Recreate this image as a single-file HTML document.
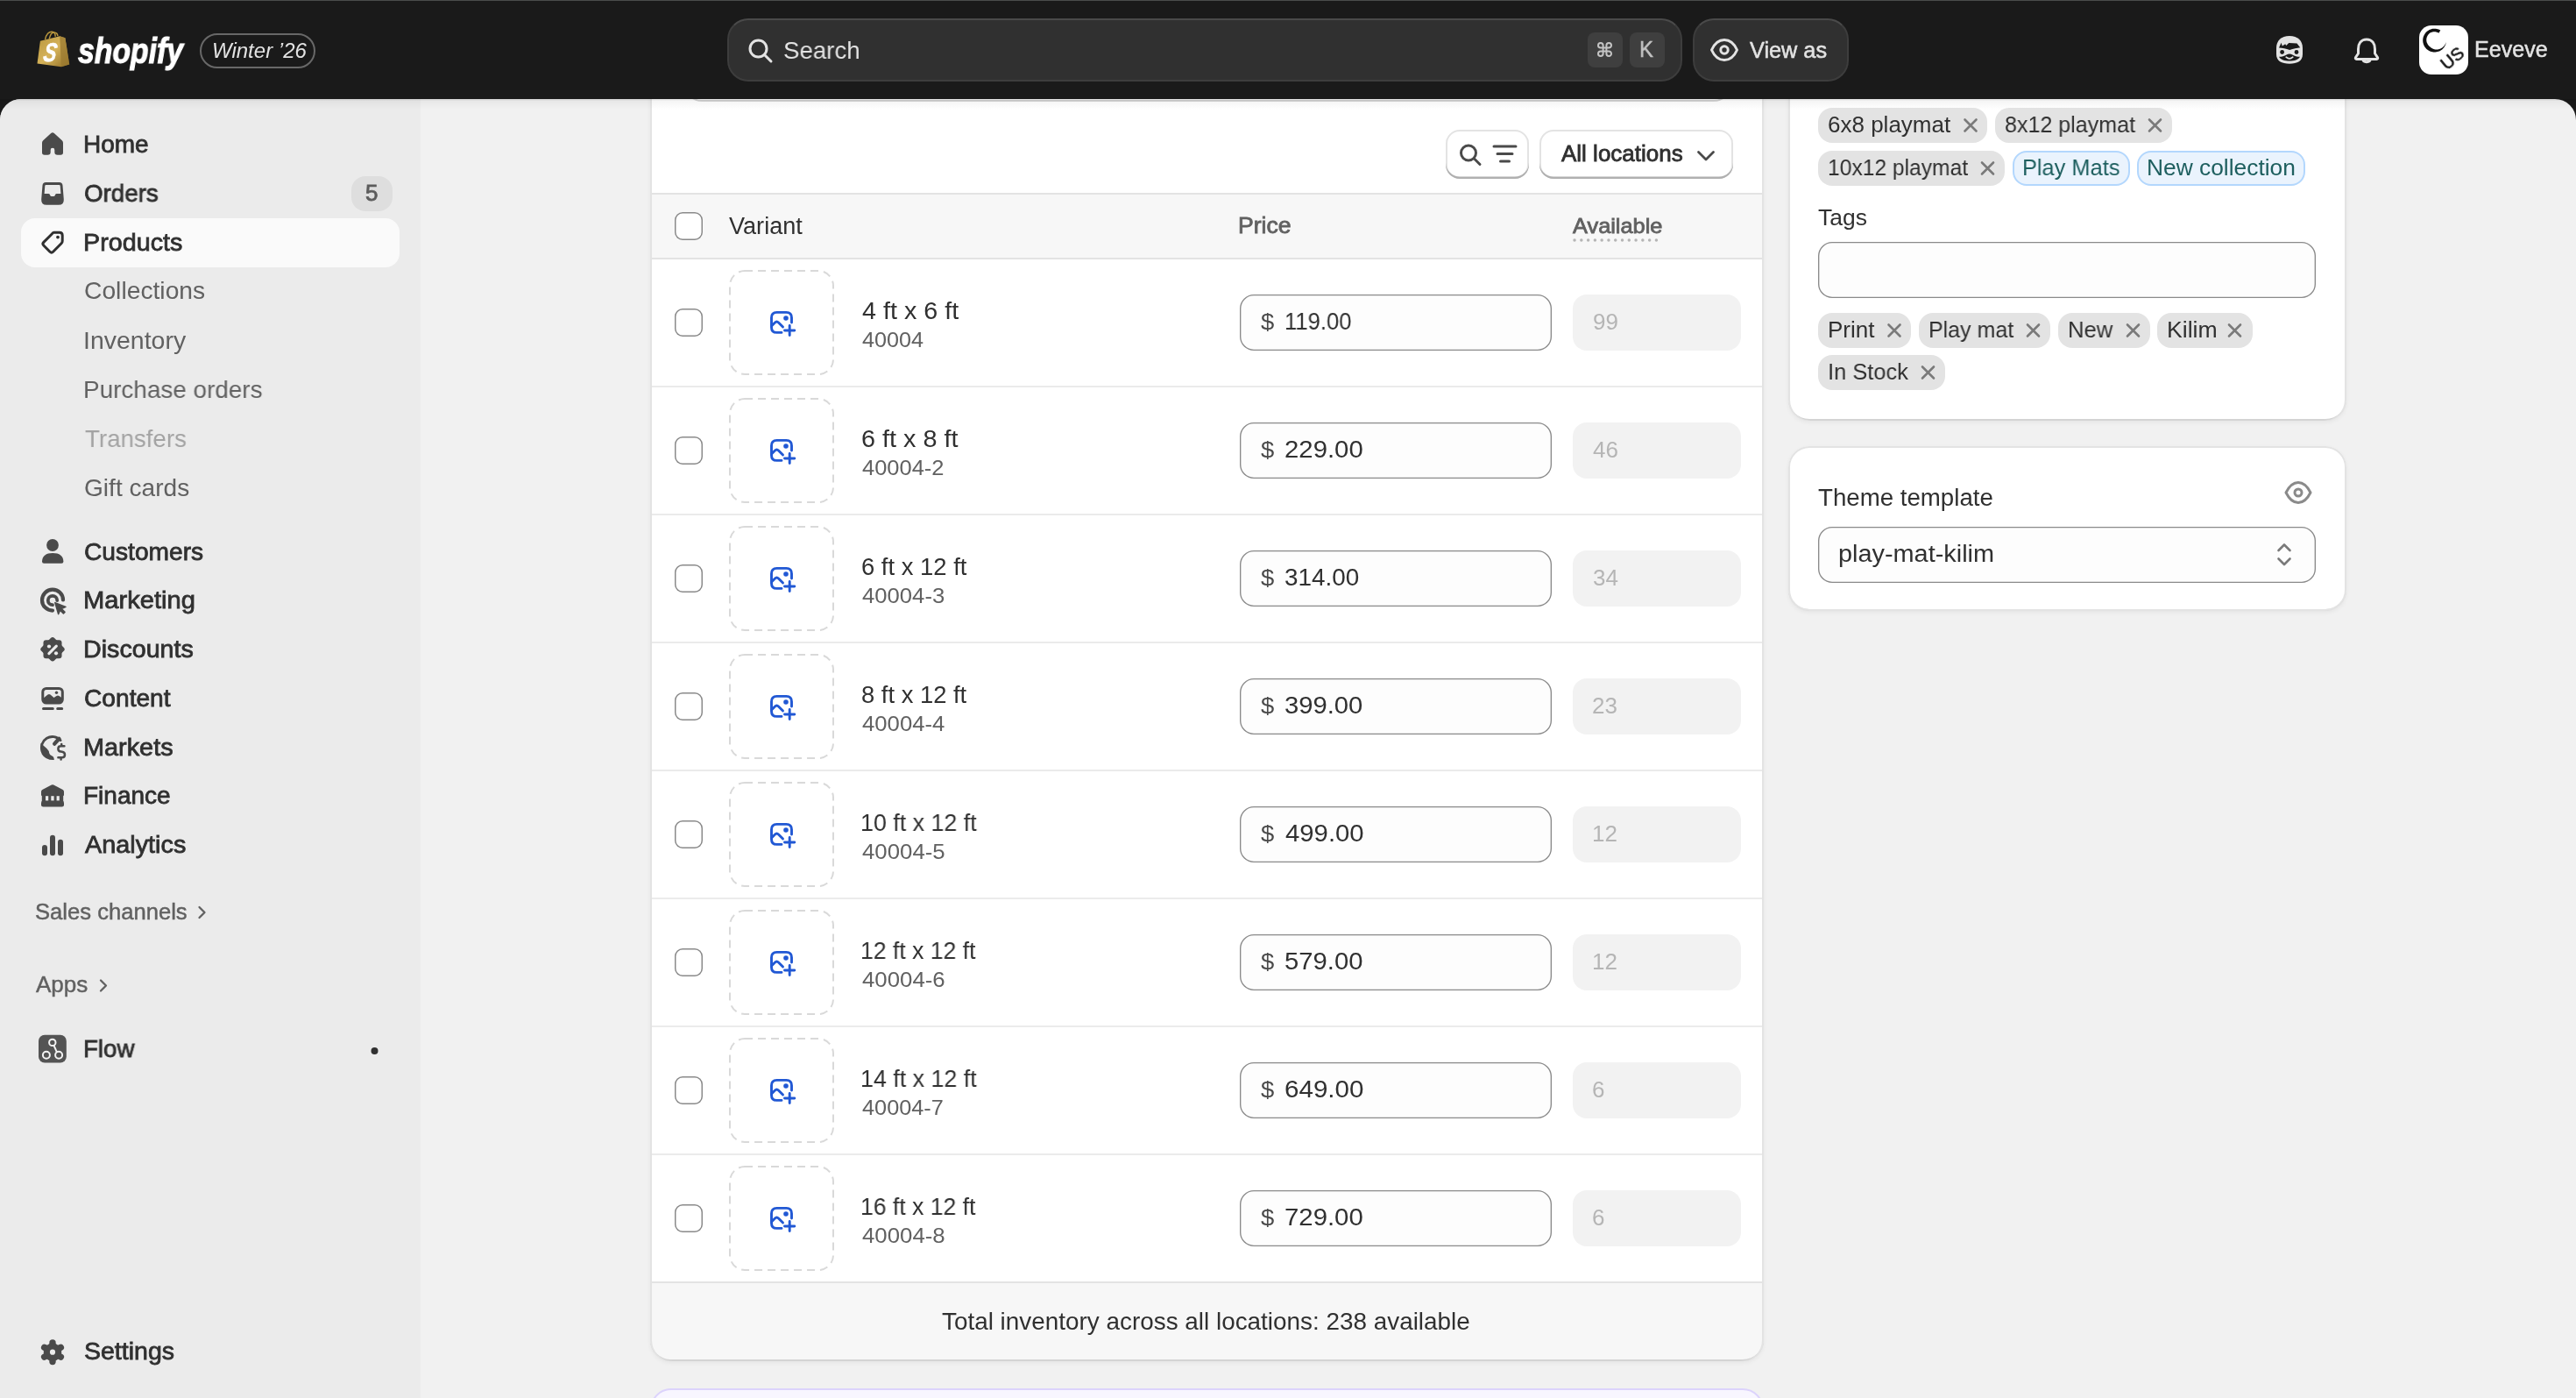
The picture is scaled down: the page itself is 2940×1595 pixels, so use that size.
<!DOCTYPE html><html><head><meta charset="utf-8"><style>
html,body{margin:0;padding:0;width:2940px;height:1595px;overflow:hidden;background:#1a1a1a;}
body>div,#root>div{position:absolute;}
.t{position:absolute;white-space:nowrap;will-change:transform;font-family:"Liberation Sans",sans-serif;}
</style></head><body><div id="root" style="position:absolute;left:0;top:0;width:2940px;height:1595px;overflow:hidden;">
<div style="left:0;top:113px;width:2940px;height:1482px;background:#f1f1f1;border-radius:24px 24px 0 0;overflow:hidden;"><div style="position:absolute;left:0;top:0;width:480px;height:1483px;background:#ebebeb;"></div></div>
<div style="left:24px;top:249px;width:432px;height:56px;background:#fafafa;border-radius:16px;"></div>
<div style="left:401px;top:201px;width:47px;height:40px;background:#dedede;border-radius:16px;"></div>
<div class="t" style="left:417.30px;top:207px;font-size:26px;line-height:26px;color:#5c5c5c;font-weight:normal;font-style:normal;-webkit-text-stroke:0.8px #5c5c5c;">5</div>
<div class="t" style="left:95.00px;top:151px;font-size:28px;line-height:28px;color:#303030;font-weight:normal;font-style:normal;-webkit-text-stroke:0.8px #303030;">Home</div>
<div class="t" style="left:95.99px;top:207px;font-size:28px;line-height:28px;color:#303030;font-weight:normal;font-style:normal;transform:scaleX(0.9906);transform-origin:0 0;-webkit-text-stroke:0.8px #303030;">Orders</div>
<div class="t" style="left:94.94px;top:263px;font-size:28px;line-height:28px;color:#303030;font-weight:normal;font-style:normal;transform:scaleX(1.0258);transform-origin:0 0;-webkit-text-stroke:0.8px #303030;">Products</div>
<div class="t" style="left:95.87px;top:616px;font-size:28px;line-height:28px;color:#303030;font-weight:normal;font-style:normal;transform:scaleX(1.0058);transform-origin:0 0;-webkit-text-stroke:0.8px #303030;">Customers</div>
<div class="t" style="left:94.91px;top:671px;font-size:28px;line-height:28px;color:#303030;font-weight:normal;font-style:normal;transform:scaleX(1.0409);transform-origin:0 0;-webkit-text-stroke:0.8px #303030;">Marketing</div>
<div class="t" style="left:94.95px;top:727px;font-size:28px;line-height:28px;color:#303030;font-weight:normal;font-style:normal;transform:scaleX(1.0236);transform-origin:0 0;-webkit-text-stroke:0.8px #303030;">Discounts</div>
<div class="t" style="left:95.87px;top:783px;font-size:28px;line-height:28px;color:#303030;font-weight:normal;font-style:normal;transform:scaleX(1.0053);transform-origin:0 0;-webkit-text-stroke:0.8px #303030;">Content</div>
<div class="t" style="left:94.93px;top:839px;font-size:28px;line-height:28px;color:#303030;font-weight:normal;font-style:normal;transform:scaleX(1.0305);transform-origin:0 0;-webkit-text-stroke:0.8px #303030;">Markets</div>
<div class="t" style="left:95.00px;top:894px;font-size:28px;line-height:28px;color:#303030;font-weight:normal;font-style:normal;-webkit-text-stroke:0.8px #303030;">Finance</div>
<div class="t" style="left:97.24px;top:950px;font-size:28px;line-height:28px;color:#303030;font-weight:normal;font-style:normal;transform:scaleX(1.0291);transform-origin:0 0;-webkit-text-stroke:0.8px #303030;">Analytics</div>
<div class="t" style="left:95.03px;top:1183px;font-size:28px;line-height:28px;color:#303030;font-weight:normal;font-style:normal;transform:scaleX(0.9879);transform-origin:0 0;-webkit-text-stroke:0.8px #303030;">Flow</div>
<div class="t" style="left:96.01px;top:1528px;font-size:28px;line-height:28px;color:#303030;font-weight:normal;font-style:normal;transform:scaleX(1.0183);transform-origin:0 0;-webkit-text-stroke:0.8px #303030;">Settings</div>
<div class="t" style="left:95.82px;top:318px;font-size:28px;line-height:28px;color:#616161;font-weight:normal;font-style:normal;transform:scaleX(1.0092);transform-origin:0 0;">Collections</div>
<div class="t" style="left:94.62px;top:375px;font-size:28px;line-height:28px;color:#616161;font-weight:normal;font-style:normal;transform:scaleX(1.0175);transform-origin:0 0;">Inventory</div>
<div class="t" style="left:94.96px;top:431px;font-size:28px;line-height:28px;color:#616161;font-weight:normal;font-style:normal;transform:scaleX(0.9957);transform-origin:0 0;">Purchase orders</div>
<div class="t" style="left:96.63px;top:487px;font-size:28px;line-height:28px;color:#a3a3a3;font-weight:normal;font-style:normal;transform:scaleX(0.9884);transform-origin:0 0;">Transfers</div>
<div class="t" style="left:95.84px;top:543px;font-size:28px;line-height:28px;color:#616161;font-weight:normal;font-style:normal;transform:scaleX(1.0031);transform-origin:0 0;">Gift cards</div>
<div class="t" style="left:39.56px;top:1028px;font-size:25.5px;line-height:25.5px;color:#616161;font-weight:normal;font-style:normal;transform:scaleX(1.0040);transform-origin:0 0;-webkit-text-stroke:0.45px #616161;">Sales channels</div>
<div class="t" style="left:40.67px;top:1111px;font-size:25.5px;line-height:25.5px;color:#616161;font-weight:normal;font-style:normal;transform:scaleX(1.0201);transform-origin:0 0;-webkit-text-stroke:0.45px #616161;">Apps</div>
<div style="left:742px;top:40px;width:1271px;height:1512.5px;background:#ffffff;border-radius:24px;box-shadow:inset 2px 0 0 #e3e3e3, inset -2px 0 0 #e3e3e3, inset 0 -2px 0 #d4d4d4, 0 2px 5px rgba(0,0,0,0.05);overflow:hidden;"></div>
<div style="left:781px;top:90px;width:1195px;height:23.5px;border-radius:0 0 20px 20px;box-shadow:0 2px 0 #d4d4d4;"></div>
<div style="left:1650px;top:148px;width:95px;height:56px;background:#fff;border-radius:16px;box-shadow:inset 0 -2.5px 0 #b0b0b0, inset 0 0 0 2px #e3e3e3;"></div>
<div style="left:1757px;top:148px;width:221px;height:56px;background:#fff;border-radius:16px;box-shadow:inset 0 -2.5px 0 #b0b0b0, inset 0 0 0 2px #e3e3e3;"></div>
<div class="t" style="left:1782.35px;top:162px;font-size:26px;line-height:26px;color:#303030;font-weight:normal;font-style:normal;-webkit-text-stroke:0.8px #303030;">All locations</div>
<div style="left:744px;top:220px;width:1267px;height:2px;background:#e3e3e3;"></div>
<div style="left:744px;top:222px;width:1267px;height:72px;background:#f7f7f7;"></div>
<div style="left:744px;top:294px;width:1267px;height:2px;background:#e3e3e3;"></div>
<div style="left:770px;top:242px;width:32px;height:32px;background:#fff;box-shadow:inset 0 0 0 1.5px #8a8a8a;border-radius:9px;"></div>
<div class="t" style="left:832.38px;top:245px;font-size:27px;line-height:27px;color:#303030;font-weight:normal;font-style:normal;transform:scaleX(1.0031);transform-origin:0 0;">Variant</div>
<div class="t" style="left:1413.22px;top:245px;font-size:25px;line-height:25px;color:#616161;font-weight:normal;font-style:normal;transform:scaleX(1.0633);transform-origin:0 0;-webkit-text-stroke:0.8px #616161;">Price</div>
<div class="t" style="left:1795.35px;top:246px;font-size:24px;line-height:24px;color:#616161;font-weight:normal;font-style:normal;transform:scaleX(1.0563);transform-origin:0 0;-webkit-text-stroke:0.8px #616161;">Available</div>
<div style="left:744px;top:440px;width:1267px;height:2px;background:#ebebeb;"></div>
<div style="left:770px;top:352px;width:32px;height:32px;background:#fff;box-shadow:inset 0 0 0 1.5px #8a8a8a;border-radius:9px;"></div>
<div class="t" style="left:983.84px;top:342px;font-size:27px;line-height:27px;color:#303030;font-weight:normal;font-style:normal;transform:scaleX(1.0635);transform-origin:0 0;">4 ft x 6 ft</div>
<div class="t" style="left:983.92px;top:376px;font-size:24px;line-height:24px;color:#616161;font-weight:normal;font-style:normal;transform:scaleX(1.0499);transform-origin:0 0;">40004</div>
<div style="left:1415px;top:336px;width:356px;height:64px;background:#fdfdfd;box-shadow:inset 0 0 0 1.35px #8a8a8a;border-radius:16px;"></div>
<div class="t" style="left:1439.21px;top:354px;font-size:26px;line-height:26px;color:#4a4a4a;font-weight:normal;font-style:normal;transform:scaleX(1.0536);transform-origin:0 0;">$</div>
<div class="t" style="left:1465.55px;top:354px;font-size:27px;line-height:27px;color:#303030;font-weight:normal;font-style:normal;transform:scaleX(0.9500);transform-origin:0 0;">119.00</div>
<div style="left:1795px;top:336px;width:192px;height:64px;background:#f2f2f2;border-radius:16px;"></div>
<div class="t" style="left:1817.53px;top:354px;font-size:26px;line-height:26px;color:#b5b5b5;font-weight:normal;font-style:normal;">99</div>
<div style="left:744px;top:586px;width:1267px;height:2px;background:#ebebeb;"></div>
<div style="left:770px;top:498px;width:32px;height:32px;background:#fff;box-shadow:inset 0 0 0 1.5px #8a8a8a;border-radius:9px;"></div>
<div class="t" style="left:983.04px;top:488px;font-size:27px;line-height:27px;color:#303030;font-weight:normal;font-style:normal;transform:scaleX(1.0669);transform-origin:0 0;">6 ft x 8 ft</div>
<div class="t" style="left:983.92px;top:522px;font-size:24px;line-height:24px;color:#616161;font-weight:normal;font-style:normal;transform:scaleX(1.0612);transform-origin:0 0;">40004-2</div>
<div style="left:1415px;top:482px;width:356px;height:64px;background:#fdfdfd;box-shadow:inset 0 0 0 1.35px #8a8a8a;border-radius:16px;"></div>
<div class="t" style="left:1439.21px;top:500px;font-size:26px;line-height:26px;color:#4a4a4a;font-weight:normal;font-style:normal;transform:scaleX(1.0536);transform-origin:0 0;">$</div>
<div class="t" style="left:1466.02px;top:500px;font-size:27px;line-height:27px;color:#303030;font-weight:normal;font-style:normal;transform:scaleX(1.0864);transform-origin:0 0;">229.00</div>
<div style="left:1795px;top:482px;width:192px;height:64px;background:#f2f2f2;border-radius:16px;"></div>
<div class="t" style="left:1818.15px;top:500px;font-size:26px;line-height:26px;color:#b5b5b5;font-weight:normal;font-style:normal;">46</div>
<div style="left:744px;top:732px;width:1267px;height:2px;background:#ebebeb;"></div>
<div style="left:770px;top:644px;width:32px;height:32px;background:#fff;box-shadow:inset 0 0 0 1.5px #8a8a8a;border-radius:9px;"></div>
<div class="t" style="left:983.11px;top:634px;font-size:27px;line-height:27px;color:#303030;font-weight:normal;font-style:normal;transform:scaleX(1.0155);transform-origin:0 0;">6 ft x 12 ft</div>
<div class="t" style="left:983.91px;top:668px;font-size:24px;line-height:24px;color:#616161;font-weight:normal;font-style:normal;transform:scaleX(1.0697);transform-origin:0 0;">40004-3</div>
<div style="left:1415px;top:628px;width:356px;height:64px;background:#fdfdfd;box-shadow:inset 0 0 0 1.35px #8a8a8a;border-radius:16px;"></div>
<div class="t" style="left:1439.21px;top:646px;font-size:26px;line-height:26px;color:#4a4a4a;font-weight:normal;font-style:normal;transform:scaleX(1.0536);transform-origin:0 0;">$</div>
<div class="t" style="left:1466.44px;top:646px;font-size:27px;line-height:27px;color:#303030;font-weight:normal;font-style:normal;transform:scaleX(1.0311);transform-origin:0 0;">314.00</div>
<div style="left:1795px;top:628px;width:192px;height:64px;background:#f2f2f2;border-radius:16px;"></div>
<div class="t" style="left:1817.76px;top:646px;font-size:26px;line-height:26px;color:#b5b5b5;font-weight:normal;font-style:normal;">34</div>
<div style="left:744px;top:878px;width:1267px;height:2px;background:#ebebeb;"></div>
<div style="left:770px;top:790px;width:32px;height:32px;background:#fff;box-shadow:inset 0 0 0 1.5px #8a8a8a;border-radius:9px;"></div>
<div class="t" style="left:983.31px;top:780px;font-size:27px;line-height:27px;color:#303030;font-weight:normal;font-style:normal;transform:scaleX(1.0137);transform-origin:0 0;">8 ft x 12 ft</div>
<div class="t" style="left:983.91px;top:814px;font-size:24px;line-height:24px;color:#616161;font-weight:normal;font-style:normal;transform:scaleX(1.0711);transform-origin:0 0;">40004-4</div>
<div style="left:1415px;top:774px;width:356px;height:64px;background:#fdfdfd;box-shadow:inset 0 0 0 1.35px #8a8a8a;border-radius:16px;"></div>
<div class="t" style="left:1439.21px;top:792px;font-size:26px;line-height:26px;color:#4a4a4a;font-weight:normal;font-style:normal;transform:scaleX(1.0536);transform-origin:0 0;">$</div>
<div class="t" style="left:1466.39px;top:792px;font-size:27px;line-height:27px;color:#303030;font-weight:normal;font-style:normal;transform:scaleX(1.0820);transform-origin:0 0;">399.00</div>
<div style="left:1795px;top:774px;width:192px;height:64px;background:#f2f2f2;border-radius:16px;"></div>
<div class="t" style="left:1817.44px;top:792px;font-size:26px;line-height:26px;color:#b5b5b5;font-weight:normal;font-style:normal;">23</div>
<div style="left:744px;top:1024px;width:1267px;height:2px;background:#ebebeb;"></div>
<div style="left:770px;top:936px;width:32px;height:32px;background:#fff;box-shadow:inset 0 0 0 1.5px #8a8a8a;border-radius:9px;"></div>
<div class="t" style="left:982.46px;top:926px;font-size:27px;line-height:27px;color:#303030;font-weight:normal;font-style:normal;transform:scaleX(0.9937);transform-origin:0 0;">10 ft x 12 ft</div>
<div class="t" style="left:983.91px;top:960px;font-size:24px;line-height:24px;color:#616161;font-weight:normal;font-style:normal;transform:scaleX(1.0749);transform-origin:0 0;">40004-5</div>
<div style="left:1415px;top:920px;width:356px;height:64px;background:#fdfdfd;box-shadow:inset 0 0 0 1.35px #8a8a8a;border-radius:16px;"></div>
<div class="t" style="left:1439.21px;top:938px;font-size:26px;line-height:26px;color:#4a4a4a;font-weight:normal;font-style:normal;transform:scaleX(1.0536);transform-origin:0 0;">$</div>
<div class="t" style="left:1466.83px;top:938px;font-size:27px;line-height:27px;color:#303030;font-weight:normal;font-style:normal;transform:scaleX(1.0852);transform-origin:0 0;">499.00</div>
<div style="left:1795px;top:920px;width:192px;height:64px;background:#f2f2f2;border-radius:16px;"></div>
<div class="t" style="left:1816.77px;top:938px;font-size:26px;line-height:26px;color:#b5b5b5;font-weight:normal;font-style:normal;">12</div>
<div style="left:744px;top:1170px;width:1267px;height:2px;background:#ebebeb;"></div>
<div style="left:770px;top:1082px;width:32px;height:32px;background:#fff;box-shadow:inset 0 0 0 1.5px #8a8a8a;border-radius:9px;"></div>
<div class="t" style="left:982.48px;top:1072px;font-size:27px;line-height:27px;color:#303030;font-weight:normal;font-style:normal;transform:scaleX(0.9846);transform-origin:0 0;">12 ft x 12 ft</div>
<div class="t" style="left:983.91px;top:1106px;font-size:24px;line-height:24px;color:#616161;font-weight:normal;font-style:normal;transform:scaleX(1.0755);transform-origin:0 0;">40004-6</div>
<div style="left:1415px;top:1066px;width:356px;height:64px;background:#fdfdfd;box-shadow:inset 0 0 0 1.35px #8a8a8a;border-radius:16px;"></div>
<div class="t" style="left:1439.21px;top:1084px;font-size:26px;line-height:26px;color:#4a4a4a;font-weight:normal;font-style:normal;transform:scaleX(1.0536);transform-origin:0 0;">$</div>
<div class="t" style="left:1466.33px;top:1084px;font-size:27px;line-height:27px;color:#303030;font-weight:normal;font-style:normal;transform:scaleX(1.0827);transform-origin:0 0;">579.00</div>
<div style="left:1795px;top:1066px;width:192px;height:64px;background:#f2f2f2;border-radius:16px;"></div>
<div class="t" style="left:1816.77px;top:1084px;font-size:26px;line-height:26px;color:#b5b5b5;font-weight:normal;font-style:normal;">12</div>
<div style="left:744px;top:1316px;width:1267px;height:2px;background:#ebebeb;"></div>
<div style="left:770px;top:1228px;width:32px;height:32px;background:#fff;box-shadow:inset 0 0 0 1.5px #8a8a8a;border-radius:9px;"></div>
<div class="t" style="left:982.46px;top:1218px;font-size:27px;line-height:27px;color:#303030;font-weight:normal;font-style:normal;transform:scaleX(0.9937);transform-origin:0 0;">14 ft x 12 ft</div>
<div class="t" style="left:983.92px;top:1252px;font-size:24px;line-height:24px;color:#616161;font-weight:normal;font-style:normal;transform:scaleX(1.0542);transform-origin:0 0;">40004-7</div>
<div style="left:1415px;top:1212px;width:356px;height:64px;background:#fdfdfd;box-shadow:inset 0 0 0 1.35px #8a8a8a;border-radius:16px;"></div>
<div class="t" style="left:1439.21px;top:1230px;font-size:26px;line-height:26px;color:#4a4a4a;font-weight:normal;font-style:normal;transform:scaleX(1.0536);transform-origin:0 0;">$</div>
<div class="t" style="left:1466.00px;top:1230px;font-size:27px;line-height:27px;color:#303030;font-weight:normal;font-style:normal;transform:scaleX(1.0954);transform-origin:0 0;">649.00</div>
<div style="left:1795px;top:1212px;width:192px;height:64px;background:#f2f2f2;border-radius:16px;"></div>
<div class="t" style="left:1817.43px;top:1230px;font-size:26px;line-height:26px;color:#b5b5b5;font-weight:normal;font-style:normal;">6</div>
<div style="left:770px;top:1374px;width:32px;height:32px;background:#fff;box-shadow:inset 0 0 0 1.5px #8a8a8a;border-radius:9px;"></div>
<div class="t" style="left:982.48px;top:1364px;font-size:27px;line-height:27px;color:#303030;font-weight:normal;font-style:normal;transform:scaleX(0.9842);transform-origin:0 0;">16 ft x 12 ft</div>
<div class="t" style="left:983.91px;top:1398px;font-size:24px;line-height:24px;color:#616161;font-weight:normal;font-style:normal;transform:scaleX(1.0753);transform-origin:0 0;">40004-8</div>
<div style="left:1415px;top:1358px;width:356px;height:64px;background:#fdfdfd;box-shadow:inset 0 0 0 1.35px #8a8a8a;border-radius:16px;"></div>
<div class="t" style="left:1439.21px;top:1376px;font-size:26px;line-height:26px;color:#4a4a4a;font-weight:normal;font-style:normal;transform:scaleX(1.0536);transform-origin:0 0;">$</div>
<div class="t" style="left:1466.00px;top:1376px;font-size:27px;line-height:27px;color:#303030;font-weight:normal;font-style:normal;transform:scaleX(1.0868);transform-origin:0 0;">729.00</div>
<div style="left:1795px;top:1358px;width:192px;height:64px;background:#f2f2f2;border-radius:16px;"></div>
<div class="t" style="left:1817.43px;top:1376px;font-size:26px;line-height:26px;color:#b5b5b5;font-weight:normal;font-style:normal;">6</div>
<div style="left:744px;top:1462px;width:1267px;height:2px;background:#e3e3e3;"></div>
<div style="left:742px;top:1464px;width:1271px;height:88.5px;background:#f7f7f7;border-radius:0 0 24px 24px;box-shadow:inset 2px 0 0 #e3e3e3, inset -2px 0 0 #e3e3e3, inset 0 -2px 0 #d4d4d4;"></div>
<div class="t" style="left:1074.87px;top:1494px;font-size:27.8px;line-height:27.8px;color:#303030;font-weight:normal;font-style:normal;transform:scaleX(1.0028);transform-origin:0 0;">Total inventory across all locations: 238 available</div>
<div style="left:742px;top:1584px;width:1271px;height:116px;background:#f8f6ff;border:2px solid #dcd3fc;border-radius:24px;box-sizing:border-box;"></div>
<div style="left:2041px;top:40px;width:637px;height:439.5px;background:#ffffff;border-radius:24px;box-shadow:inset 2px 0 0 #e3e3e3, inset -2px 0 0 #e3e3e3, inset 0 -2px 0 #d4d4d4, 0 2px 5px rgba(0,0,0,0.05);"></div>
<div style="left:2075px;top:123px;width:193px;height:40px;background:#e3e3e3;border-radius:16px;"></div>
<div class="t" style="left:2086.18px;top:129px;font-size:26px;line-height:26px;color:#303030;font-weight:normal;font-style:normal;">6x8 playmat</div>
<div style="left:2277px;top:123px;width:202px;height:40px;background:#e3e3e3;border-radius:16px;"></div>
<div class="t" style="left:2288.16px;top:129px;font-size:26px;line-height:26px;color:#303030;font-weight:normal;font-style:normal;transform:scaleX(0.9637);transform-origin:0 0;">8x12 playmat</div>
<div style="left:2075px;top:172px;width:213px;height:40px;background:#e3e3e3;border-radius:16px;"></div>
<div class="t" style="left:2085.63px;top:178px;font-size:26px;line-height:26px;color:#303030;font-weight:normal;font-style:normal;transform:scaleX(0.9465);transform-origin:0 0;">10x12 playmat</div>
<div style="left:2297px;top:172px;width:134px;height:40px;background:#eaf3fd;border:2px solid #b3d7fd;border-radius:16px;box-sizing:border-box;"></div>
<div class="t" style="left:2307.72px;top:178px;font-size:26px;line-height:26px;color:#1e5f5f;font-weight:normal;font-style:normal;transform:scaleX(0.9759);transform-origin:0 0;">Play Mats</div>
<div style="left:2439px;top:172px;width:192px;height:40px;background:#eaf3fd;border:2px solid #b3d7fd;border-radius:16px;box-sizing:border-box;"></div>
<div class="t" style="left:2449.84px;top:178px;font-size:26px;line-height:26px;color:#1e5f5f;font-weight:normal;font-style:normal;transform:scaleX(1.0134);transform-origin:0 0;">New collection</div>
<div class="t" style="left:2075.16px;top:235px;font-size:26px;line-height:26px;color:#303030;font-weight:normal;font-style:normal;transform:scaleX(1.0173);transform-origin:0 0;">Tags</div>
<div style="left:2075px;top:276px;width:568px;height:64px;background:#fdfdfd;box-shadow:inset 0 0 0 1.35px #8a8a8a;border-radius:16px;"></div>
<div style="left:2075px;top:357px;width:106px;height:40px;background:#e3e3e3;border-radius:16px;"></div>
<div class="t" style="left:2085.88px;top:363px;font-size:26px;line-height:26px;color:#303030;font-weight:normal;font-style:normal;transform:scaleX(0.9924);transform-origin:0 0;">Print</div>
<div style="left:2190px;top:357px;width:150px;height:40px;background:#e3e3e3;border-radius:16px;"></div>
<div class="t" style="left:2200.95px;top:363px;font-size:26px;line-height:26px;color:#303030;font-weight:normal;font-style:normal;transform:scaleX(0.9613);transform-origin:0 0;">Play mat</div>
<div style="left:2349px;top:357px;width:105px;height:40px;background:#e3e3e3;border-radius:16px;"></div>
<div class="t" style="left:2359.90px;top:363px;font-size:26px;line-height:26px;color:#303030;font-weight:normal;font-style:normal;transform:scaleX(0.9861);transform-origin:0 0;">New</div>
<div style="left:2462px;top:357px;width:109px;height:40px;background:#e3e3e3;border-radius:16px;"></div>
<div class="t" style="left:2472.82px;top:363px;font-size:26px;line-height:26px;color:#303030;font-weight:normal;font-style:normal;transform:scaleX(1.0242);transform-origin:0 0;">Kilim</div>
<div style="left:2075px;top:405px;width:145px;height:40px;background:#e3e3e3;border-radius:16px;"></div>
<div class="t" style="left:2085.65px;top:411px;font-size:26px;line-height:26px;color:#303030;font-weight:normal;font-style:normal;transform:scaleX(0.9774);transform-origin:0 0;">In Stock</div>
<div style="left:2041px;top:508.5px;width:637px;height:188.5px;background:#ffffff;border-radius:24px;box-shadow:inset 0 0 0 2px #e3e3e3, inset 0 -2px 0 #d4d4d4, 0 2px 5px rgba(0,0,0,0.05);"></div>
<div class="t" style="left:2075.13px;top:555px;font-size:27px;line-height:27px;color:#303030;font-weight:normal;font-style:normal;transform:scaleX(1.0244);transform-origin:0 0;">Theme template</div>
<div style="left:2075px;top:601px;width:568px;height:64px;background:#fdfdfd;box-shadow:inset 0 0 0 1.35px #8a8a8a;border-radius:16px;"></div>
<div class="t" style="left:2097.64px;top:619px;font-size:27px;line-height:27px;color:#303030;font-weight:normal;font-style:normal;transform:scaleX(1.0691);transform-origin:0 0;">play-mat-kilim</div>
<div style="left:0px;top:0px;width:2940px;height:113px;background:#1a1a1a;"></div>
<div style="left:0px;top:0px;width:2940px;height:1px;background:#4a4c4b;"></div>
<div class="t" style="left:88.62px;top:38px;font-size:40px;line-height:40px;color:#ffffff;font-weight:bold;font-style:italic;transform:scaleX(0.8436);transform-origin:0 0;-webkit-text-stroke:1.1px #fff;">shopify</div>
<div style="left:228px;top:38px;width:132px;height:40px;border:2px solid #686868;border-radius:20px;box-sizing:border-box;"></div>
<div class="t" style="left:241.53px;top:46px;font-size:24px;line-height:24px;color:#e3e3e3;font-weight:normal;font-style:italic;">Winter ’26</div>
<div style="left:830px;top:21px;width:1090px;height:72px;background:#303030;border:2px solid #3d3d3d;border-top-color:#4a4a4a;border-radius:24px;box-sizing:border-box;"></div>
<div class="t" style="left:893.75px;top:44px;font-size:28px;line-height:28px;color:#e3e3e3;font-weight:normal;font-style:normal;transform:scaleX(0.9868);transform-origin:0 0;">Search</div>
<div style="left:1812px;top:37px;width:40px;height:40px;background:#3f3f3f;border-radius:8px;"></div>
<div style="left:1860px;top:37px;width:40px;height:40px;background:#3f3f3f;border-radius:8px;"></div>
<div class="t" style="left:1871.29px;top:43px;font-size:26px;line-height:26px;color:#c4c4c4;font-weight:normal;font-style:normal;transform:scaleX(0.9184);transform-origin:0 0;-webkit-text-stroke:0.5px #c4c4c4;">K</div>
<div style="left:1932px;top:21px;width:178px;height:72px;background:#303030;border:2px solid #3d3d3d;border-top-color:#4a4a4a;border-radius:24px;box-sizing:border-box;"></div>
<div class="t" style="left:1997.14px;top:45px;font-size:25px;line-height:25px;color:#e3e3e3;font-weight:normal;font-style:normal;transform:scaleX(1.0113);transform-origin:0 0;-webkit-text-stroke:0.5px #e3e3e3;">View as</div>
<div style="left:2761px;top:29px;width:56px;height:56px;background:#ffffff;border-radius:14px;"></div>
<div class="t" style="left:2792px;top:63px;font-size:21px;line-height:21px;color:#111;-webkit-text-stroke:0.6px #111;transform-origin:0 17px;transform:rotate(-40deg) scaleX(0.95);">US</div>
<div class="t" style="left:2824.19px;top:44px;font-size:25px;line-height:25px;color:#e3e3e3;font-weight:normal;font-style:normal;transform:scaleX(1.0034);transform-origin:0 0;-webkit-text-stroke:0.5px #e3e3e3;">Eeveve</div>
<div style="left:0px;top:113px;width:2940px;height:12px;background:linear-gradient(rgba(0,0,0,0.13),rgba(0,0,0,0.04) 2.5px,rgba(0,0,0,0) 12px);"></div>
<svg style="position:absolute;left:0;top:0;" width="2940" height="1595" viewBox="0 0 2940 1595">
<defs><linearGradient id="bagg" x1="0" y1="0" x2="1" y2="1"><stop offset="0" stop-color="#b8963e"/><stop offset="0.5" stop-color="#d6b35a"/><stop offset="1" stop-color="#8f6d25"/></linearGradient></defs>
<g>
<path d="M45.9 46.8 L68.2 41.3 L74.4 43.3 L79.2 73.5 L69.9 76.3 L42.5 72.5 Z" fill="url(#bagg)"/>
<path d="M68.2 41.3 L74.4 43.3 L79.2 73.5 L69.9 76.3 Z" fill="#9a7a30" opacity="0.75"/>
<path d="M51.6 45.2 C52.5 39 56 36 59.3 36.2 C62 36.4 63.2 39 63.2 41.8" fill="none" stroke="#b8963e" stroke-width="1.5"/>
<path d="M56.3 44 C57.5 39.5 59.5 37 61.5 37.1 C64.5 37.3 65.8 39.5 65.9 41.2" fill="none" stroke="#b8963e" stroke-width="1.5"/>
</g>
<text x="0" y="0" font-family="Liberation Sans" font-weight="bold" font-style="italic" font-size="30" fill="#ffffff" stroke="#ffffff" stroke-width="0.6" transform="translate(48.6 70.1) skewX(-9) scale(0.74 1)">S</text>
<circle cx="865.5" cy="55.5" r="9.5" fill="none" stroke="#e3e3e3" stroke-width="3"/><path d="M872.5 62.5 L880 70" stroke="#e3e3e3" stroke-width="3" stroke-linecap="round"/>
<path d="M1829.6 51.8 A2.8 2.8 0 1 0 1826.8 54.6 L1836.2 54.6 A2.8 2.8 0 1 0 1833.4 51.8 L1833.4 61.2 A2.8 2.8 0 1 0 1836.2 58.4 L1826.8 58.4 A2.8 2.8 0 1 0 1829.6 61.2 Z" fill="none" stroke="#c4c4c4" stroke-width="2"/>
<path d="M1953.5 57 C1957 49 1962 45.5 1968 45.5 C1974 45.5 1979 49 1982.5 57 C1979 65 1974 68.5 1968 68.5 C1962 68.5 1957 65 1953.5 57 Z" fill="none" stroke="#e3e3e3" stroke-width="3" stroke-linejoin="round"/><circle cx="1968" cy="57" r="4.2" fill="none" stroke="#e3e3e3" stroke-width="3"/>
<g>
<path d="M2613 41.1 C2622.5 41.1 2628 46.5 2628 55 L2628 62 C2628 69.5 2622 72.7 2613 72.7 C2604 72.7 2598 69.5 2598 62 L2598 55 C2598 46.5 2603.5 41.1 2613 41.1 Z" fill="#e3e3e3"/>
<path d="M2601 54.5 L2603.6 48.8 L2604.8 52.5 L2608.2 50.2 L2609.2 52 L2612.3 48.9 L2621.5 49.6 L2625.2 54.2 C2621.5 54.6 2617.5 55.6 2613.2 57 C2609 55.6 2605 54.8 2601 54.5 Z" fill="#1a1a1a"/>
<circle cx="2604.6" cy="59.5" r="2.4" fill="#1a1a1a"/><circle cx="2621" cy="59.5" r="2.4" fill="#1a1a1a"/>
<path d="M2601 64.8 C2604.5 64.8 2607 64 2609.6 62.4 C2611.6 61.2 2614.4 61.2 2616.4 62.4 C2619 64 2621.5 64.8 2625 64.8 C2623 68.2 2618.5 69.6 2613 69.6 C2607.5 69.6 2603 68.2 2601 64.8 Z" fill="#1a1a1a"/>
<path d="M2609.2 65.2 Q2613 68.6 2616.8 65.2" fill="none" stroke="#e3e3e3" stroke-width="1.7" stroke-linecap="round"/>
</g>
<path d="M2701 45 C2694.5 45 2691.5 50 2691.5 56 L2691.5 61 L2688.5 65.5 C2688 66.5 2688.5 67.5 2689.5 67.5 L2712.5 67.5 C2713.5 67.5 2714 66.5 2713.5 65.5 L2710.5 61 L2710.5 56 C2710.5 50 2707.5 45 2701 45 Z" fill="none" stroke="#e3e3e3" stroke-width="3" stroke-linejoin="round"/><path d="M2697 68 C2697 71.5 2705 71.5 2705 68" fill="none" stroke="#e3e3e3" stroke-width="3"/>
<path fill="#111" d="M2791.87 47.96 L2791.66 49.08 L2791.36 50.18 L2790.97 51.25 L2790.49 52.28 L2789.92 53.27 L2789.27 54.20 L2788.55 55.08 L2787.75 55.89 L2786.89 56.63 L2785.96 57.30 L2784.99 57.88 L2783.96 58.38 L2782.90 58.79 L2781.81 59.11 L2780.70 59.34 L2779.57 59.47 L2778.43 59.50 L2777.29 59.44 L2776.17 59.28 L2775.06 59.02 L2773.97 58.68 L2772.92 58.24 L2771.91 57.71 L2770.95 57.10 L2770.05 56.41 L2769.20 55.65 L2768.43 54.82 L2767.72 53.93 L2767.10 52.97 L2766.56 51.97 L2766.10 50.93 L2765.74 49.85 L2765.46 48.75 L2765.29 47.62 L2765.21 46.49 L2765.22 45.35 L2765.33 44.22 L2765.54 43.10 L2765.84 42.00 L2766.23 40.94 L2766.72 39.91 L2767.29 38.92 L2767.94 37.99 L2768.66 37.11 L2769.46 36.30 L2770.33 35.56 L2771.25 34.90 L2772.23 34.31 L2773.25 33.81 L2774.31 33.40 L2775.40 33.09 L2776.52 32.86 L2777.65 32.73 L2778.79 32.70 L2779.92 32.77 L2781.05 32.93 L2782.16 33.18 L2783.24 33.53 L2784.29 33.97 L2785.30 34.50 L2783.40 37.79 L2782.70 37.37 L2781.96 37.01 L2781.18 36.72 L2780.39 36.49 L2779.57 36.33 L2778.74 36.23 L2777.90 36.21 L2777.05 36.27 L2776.21 36.39 L2775.40 36.63 L2774.61 36.93 L2773.84 37.30 L2773.15 37.79 L2772.49 38.32 L2771.89 38.91 L2771.35 39.54 L2770.86 40.21 L2770.44 40.92 L2770.08 41.66 L2769.78 42.42 L2769.55 43.20 L2769.40 43.99 L2769.30 44.78 L2769.28 45.58 L2769.33 46.37 L2769.44 47.15 L2769.61 47.91 L2769.85 48.65 L2770.15 49.36 L2770.51 50.05 L2770.87 50.72 L2771.29 51.36 L2771.77 51.96 L2772.29 52.52 L2772.86 53.03 L2773.46 53.49 L2774.10 53.91 L2774.70 54.44 L2775.36 54.92 L2776.06 55.35 L2776.82 55.71 L2777.63 56.02 L2778.47 56.26 L2779.35 56.42 L2780.25 56.51 L2781.17 56.52 L2782.11 56.44 L2783.05 56.28 L2783.99 56.04 L2784.92 55.70 L2785.83 55.28 L2786.71 54.78 L2787.56 54.18 L2788.36 53.51 L2789.12 52.76 L2789.81 51.93 L2790.44 51.03 L2791.00 50.07 L2791.48 49.04 L2791.87 47.96 Z"/>
<path d="M227.5 1035 L233.5 1041 L227.5 1047" fill="none" stroke="#616161" stroke-width="2.3" stroke-linecap="round" stroke-linejoin="round"/>
<path d="M115 1118.5 L121 1124.5 L115 1130.5" fill="none" stroke="#616161" stroke-width="2.3" stroke-linecap="round" stroke-linejoin="round"/>
<circle cx="427.5" cy="1199" r="4" fill="#303030"/>
<circle cx="1676" cy="174.5" r="8.5" fill="none" stroke="#4a4a4a" stroke-width="3"/><path d="M1682.5 181 L1689 187.5" stroke="#4a4a4a" stroke-width="3" stroke-linecap="round"/><path d="M1705 167 L1730 167 M1709 175.5 L1726 175.5 M1712.5 184 L1722.5 184" stroke="#4a4a4a" stroke-width="3" stroke-linecap="round"/>
<path d="M1938.5 173.5 L1947 182 L1955.5 173.5" fill="none" stroke="#4a4a4a" stroke-width="2.8" stroke-linecap="round" stroke-linejoin="round"/>
<line x1="1797" y1="274" x2="1898" y2="274" stroke="#b5b5b5" stroke-width="3.4" stroke-dasharray="0.1 7.68" stroke-linecap="round"/>
<rect x="833" y="309" width="118" height="118" rx="17" fill="none" stroke="#d9d9d9" stroke-width="2" stroke-dasharray="9 6"/>
<g transform="translate(0,0)" fill="none" stroke="#2158d4" stroke-width="2.9" stroke-linecap="round" stroke-linejoin="round"><path d="M903.5 368 L903.5 362.5 Q903.5 356.4 897.5 356.4 L886.5 356.4 Q880.5 356.4 880.5 362.5 L880.5 373.4 Q880.5 379.4 886.5 379.4 L892 379.4"/><path d="M881 371.5 L884.5 368 Q886.5 366 888.5 368 L893.5 373"/><path d="M901.2 371.5 L901.2 382.5 M895.5 377 L906.8 377"/><circle cx="897" cy="363" r="1.6" fill="#2158d4" stroke-width="2.4"/></g>
<rect x="833" y="455" width="118" height="118" rx="17" fill="none" stroke="#d9d9d9" stroke-width="2" stroke-dasharray="9 6"/>
<g transform="translate(0,146)" fill="none" stroke="#2158d4" stroke-width="2.9" stroke-linecap="round" stroke-linejoin="round"><path d="M903.5 368 L903.5 362.5 Q903.5 356.4 897.5 356.4 L886.5 356.4 Q880.5 356.4 880.5 362.5 L880.5 373.4 Q880.5 379.4 886.5 379.4 L892 379.4"/><path d="M881 371.5 L884.5 368 Q886.5 366 888.5 368 L893.5 373"/><path d="M901.2 371.5 L901.2 382.5 M895.5 377 L906.8 377"/><circle cx="897" cy="363" r="1.6" fill="#2158d4" stroke-width="2.4"/></g>
<rect x="833" y="601" width="118" height="118" rx="17" fill="none" stroke="#d9d9d9" stroke-width="2" stroke-dasharray="9 6"/>
<g transform="translate(0,292)" fill="none" stroke="#2158d4" stroke-width="2.9" stroke-linecap="round" stroke-linejoin="round"><path d="M903.5 368 L903.5 362.5 Q903.5 356.4 897.5 356.4 L886.5 356.4 Q880.5 356.4 880.5 362.5 L880.5 373.4 Q880.5 379.4 886.5 379.4 L892 379.4"/><path d="M881 371.5 L884.5 368 Q886.5 366 888.5 368 L893.5 373"/><path d="M901.2 371.5 L901.2 382.5 M895.5 377 L906.8 377"/><circle cx="897" cy="363" r="1.6" fill="#2158d4" stroke-width="2.4"/></g>
<rect x="833" y="747" width="118" height="118" rx="17" fill="none" stroke="#d9d9d9" stroke-width="2" stroke-dasharray="9 6"/>
<g transform="translate(0,438)" fill="none" stroke="#2158d4" stroke-width="2.9" stroke-linecap="round" stroke-linejoin="round"><path d="M903.5 368 L903.5 362.5 Q903.5 356.4 897.5 356.4 L886.5 356.4 Q880.5 356.4 880.5 362.5 L880.5 373.4 Q880.5 379.4 886.5 379.4 L892 379.4"/><path d="M881 371.5 L884.5 368 Q886.5 366 888.5 368 L893.5 373"/><path d="M901.2 371.5 L901.2 382.5 M895.5 377 L906.8 377"/><circle cx="897" cy="363" r="1.6" fill="#2158d4" stroke-width="2.4"/></g>
<rect x="833" y="893" width="118" height="118" rx="17" fill="none" stroke="#d9d9d9" stroke-width="2" stroke-dasharray="9 6"/>
<g transform="translate(0,584)" fill="none" stroke="#2158d4" stroke-width="2.9" stroke-linecap="round" stroke-linejoin="round"><path d="M903.5 368 L903.5 362.5 Q903.5 356.4 897.5 356.4 L886.5 356.4 Q880.5 356.4 880.5 362.5 L880.5 373.4 Q880.5 379.4 886.5 379.4 L892 379.4"/><path d="M881 371.5 L884.5 368 Q886.5 366 888.5 368 L893.5 373"/><path d="M901.2 371.5 L901.2 382.5 M895.5 377 L906.8 377"/><circle cx="897" cy="363" r="1.6" fill="#2158d4" stroke-width="2.4"/></g>
<rect x="833" y="1039" width="118" height="118" rx="17" fill="none" stroke="#d9d9d9" stroke-width="2" stroke-dasharray="9 6"/>
<g transform="translate(0,730)" fill="none" stroke="#2158d4" stroke-width="2.9" stroke-linecap="round" stroke-linejoin="round"><path d="M903.5 368 L903.5 362.5 Q903.5 356.4 897.5 356.4 L886.5 356.4 Q880.5 356.4 880.5 362.5 L880.5 373.4 Q880.5 379.4 886.5 379.4 L892 379.4"/><path d="M881 371.5 L884.5 368 Q886.5 366 888.5 368 L893.5 373"/><path d="M901.2 371.5 L901.2 382.5 M895.5 377 L906.8 377"/><circle cx="897" cy="363" r="1.6" fill="#2158d4" stroke-width="2.4"/></g>
<rect x="833" y="1185" width="118" height="118" rx="17" fill="none" stroke="#d9d9d9" stroke-width="2" stroke-dasharray="9 6"/>
<g transform="translate(0,876)" fill="none" stroke="#2158d4" stroke-width="2.9" stroke-linecap="round" stroke-linejoin="round"><path d="M903.5 368 L903.5 362.5 Q903.5 356.4 897.5 356.4 L886.5 356.4 Q880.5 356.4 880.5 362.5 L880.5 373.4 Q880.5 379.4 886.5 379.4 L892 379.4"/><path d="M881 371.5 L884.5 368 Q886.5 366 888.5 368 L893.5 373"/><path d="M901.2 371.5 L901.2 382.5 M895.5 377 L906.8 377"/><circle cx="897" cy="363" r="1.6" fill="#2158d4" stroke-width="2.4"/></g>
<rect x="833" y="1331" width="118" height="118" rx="17" fill="none" stroke="#d9d9d9" stroke-width="2" stroke-dasharray="9 6"/>
<g transform="translate(0,1022)" fill="none" stroke="#2158d4" stroke-width="2.9" stroke-linecap="round" stroke-linejoin="round"><path d="M903.5 368 L903.5 362.5 Q903.5 356.4 897.5 356.4 L886.5 356.4 Q880.5 356.4 880.5 362.5 L880.5 373.4 Q880.5 379.4 886.5 379.4 L892 379.4"/><path d="M881 371.5 L884.5 368 Q886.5 366 888.5 368 L893.5 373"/><path d="M901.2 371.5 L901.2 382.5 M895.5 377 L906.8 377"/><circle cx="897" cy="363" r="1.6" fill="#2158d4" stroke-width="2.4"/></g>
<path d="M2242.5 136.5 L2255.5 149.5 M2255.5 136.5 L2242.5 149.5" stroke="#7a7a7a" stroke-width="2.6" stroke-linecap="round"/>
<path d="M2453.0 136.5 L2466.0 149.5 M2466.0 136.5 L2453.0 149.5" stroke="#7a7a7a" stroke-width="2.6" stroke-linecap="round"/>
<path d="M2262.0 185.5 L2275.0 198.5 M2275.0 185.5 L2262.0 198.5" stroke="#7a7a7a" stroke-width="2.6" stroke-linecap="round"/>
<path d="M2155.5 370.5 L2168.5 383.5 M2168.5 370.5 L2155.5 383.5" stroke="#7a7a7a" stroke-width="2.6" stroke-linecap="round"/>
<path d="M2314.0 370.5 L2327.0 383.5 M2327.0 370.5 L2314.0 383.5" stroke="#7a7a7a" stroke-width="2.6" stroke-linecap="round"/>
<path d="M2428.0 370.5 L2441.0 383.5 M2441.0 370.5 L2428.0 383.5" stroke="#7a7a7a" stroke-width="2.6" stroke-linecap="round"/>
<path d="M2544.0 370.5 L2557.0 383.5 M2557.0 370.5 L2544.0 383.5" stroke="#7a7a7a" stroke-width="2.6" stroke-linecap="round"/>
<path d="M2194.0 418.5 L2207.0 431.5 M2207.0 418.5 L2194.0 431.5" stroke="#7a7a7a" stroke-width="2.6" stroke-linecap="round"/>
<path d="M2609 562 C2613 554 2618 550.5 2623 550.5 C2628 550.5 2633 554 2637 562 C2633 570 2628 573.5 2623 573.5 C2618 573.5 2613 570 2609 562 Z" fill="none" stroke="#8a8a8a" stroke-width="3" stroke-linejoin="round"/><circle cx="2623" cy="562" r="4" fill="none" stroke="#8a8a8a" stroke-width="3"/>
<path d="M2600.5 628 L2607 621.5 L2613.5 628 M2600.5 637.5 L2607 644 L2613.5 637.5" fill="none" stroke="#7a7a7a" stroke-width="2.6" stroke-linecap="round" stroke-linejoin="round"/>
<path fill="#4a4a4a" d="M48 163 Q48 161.4 49.2 160.3 L58.2 152.1 Q60 150.5 61.8 152.1 L70.8 160.3 Q72 161.4 72 163 L72 174 Q72 176.8 69.2 176.8 L65.6 176.8 Q62.3 176.8 62.3 173.5 L62.3 170.9 Q62.3 168.7 60 168.7 Q57.7 168.7 57.7 170.9 L57.7 173.5 Q57.7 176.8 54.4 176.8 L50.8 176.8 Q48 176.8 48 174 Z"/>
<path fill="#4a4a4a" fill-rule="evenodd" d="M52.3 208 L67.7 208 Q71.2 208 71.5 211.5 L72.8 227.5 Q73.2 233.8 66.8 233.8 L53.2 233.8 Q46.8 233.8 47.2 227.5 L48.5 211.5 Q48.8 208 52.3 208 Z M52.5 211 L67.5 211 Q68.6 211 68.7 212 L69.4 221 L64.6 221 Q63.6 221 63.1 222 L62.6 223.2 Q62.2 224 61.3 224 L58.7 224 Q57.8 224 57.4 223.2 L56.9 222 Q56.4 221 55.4 221 L50.6 221 L51.3 212 Q51.4 211 52.5 211 Z"/>
<path fill="none" stroke="#303030" stroke-width="3" stroke-linejoin="round" d="M61.5 265.2 L68 265.2 Q71.2 265.2 71.2 268.4 L71.2 275 Q71.2 276.6 70 277.8 L60.6 287.2 Q58.8 289 57 287.2 L49.8 280 Q48 278.2 49.8 276.4 L59.2 267 Q60.2 265.2 61.5 265.2 Z"/><circle cx="66" cy="270.6" r="1.9" fill="#303030"/>
<circle cx="60" cy="622" r="6.9" fill="#4a4a4a"/><path fill="#4a4a4a" d="M48 640.5 Q48.5 631 60.2 631 Q71.9 631 72.4 640.5 Q72.5 642.8 70.2 642.8 L50.2 642.8 Q47.9 642.8 48 640.5 Z"/>
<g fill="none" stroke="#4a4a4a" stroke-linecap="round"><path stroke-width="4.2" d="M72 684.5 A12 12 0 1 0 60 696.6"/><path stroke-width="3.8" d="M65.2 685 A5.2 5.2 0 1 0 60 690.2"/></g><path fill="#4a4a4a" stroke="#4a4a4a" stroke-width="1.5" stroke-linejoin="round" d="M62.8 687.6 L75 692.4 L70.2 694.6 L74 698.4 L72.4 700 L68.6 696.2 L66.6 700.6 Z"/>
<rect x="49.5" y="730.25" width="21" height="21" rx="3" fill="#4a4a4a"/><rect x="49.5" y="730.25" width="21" height="21" rx="3" fill="#4a4a4a" transform="rotate(45 60 740.75)"/>
<path stroke="#ebebeb" stroke-width="3.2" stroke-linecap="round" d="M55.9 745.6 L64.3 737.1"/><circle cx="56" cy="737.5" r="2.1" fill="#ebebeb"/><circle cx="64" cy="745.3" r="2.1" fill="#ebebeb"/>
<rect x="48.8" y="785.5" width="22.5" height="16.5" rx="4" fill="none" stroke="#4a4a4a" stroke-width="3"/><path fill="#4a4a4a" d="M49 797 L54.5 792.5 Q56 791.3 57.5 792.5 L61.5 796 L64.5 794 Q66 793 67.5 794 L71 796.5 L71 801 L49 801 Z"/><circle cx="64.5" cy="790.3" r="1.7" fill="#4a4a4a"/><path stroke="#4a4a4a" stroke-width="3" stroke-linecap="round" d="M49.5 808.4 L60.3 808.4 M65.7 808.4 L70.7 808.4"/>
<path fill="none" stroke="#4a4a4a" stroke-width="2.8" stroke-linecap="round" d="M48.1 857.3 A12.5 12.5 0 0 1 69.1 844.6"/><path fill="#4a4a4a" d="M46.6 848 L53.4 854 Q56 856.5 56.2 859.2 Q56.8 861.8 59.4 862.6 Q61.6 863.4 61.8 867 Q52 867.4 47.8 860.4 Q45.6 855 46.6 848 Z"/><path stroke="#4a4a4a" stroke-width="4.4" stroke-linecap="round" d="M62.2 848.6 L67.4 842.8"/><path fill="none" stroke="#4a4a4a" stroke-width="2.5" stroke-linecap="round" d="M73.4 851.2 L69.2 851.2 Q66.4 851.2 66.4 854.4 Q66.4 857.2 69.6 857.6 L71 857.8 Q74 858.2 74 861.2 Q74 864.2 70.8 864.2 L66.4 864.2 M70.2 848.9 L70.2 851 M69.6 864.4 L69.6 866.5"/>
<path fill="#4a4a4a" d="M47 903.2 Q47 901.8 48.3 901.1 L58.8 895.5 Q60 894.9 61.2 895.5 L71.7 901.1 Q73 901.8 73 903.2 L73 907.8 L47 907.8 Z"/><rect x="47.8" y="907" width="24.4" height="7.5" fill="#4a4a4a"/><rect x="52" y="908.2" width="3.2" height="5.6" fill="#ebebeb"/><rect x="58.3" y="908.2" width="3.3" height="5.6" fill="#ebebeb"/><rect x="64.6" y="908.2" width="3.2" height="5.6" fill="#ebebeb"/><rect x="47" y="913.6" width="26" height="6.9" rx="2.3" fill="#4a4a4a"/>
<rect x="48" y="964" width="6" height="12.2" rx="3" fill="#4a4a4a"/><rect x="57" y="952.8" width="6" height="23.4" rx="3" fill="#4a4a4a"/><rect x="66" y="957.8" width="6" height="18.4" rx="3" fill="#4a4a4a"/>
<rect x="44" y="1180.8" width="31.8" height="31.8" rx="7" fill="#545454"/><g fill="none" stroke="#f3f3f3" stroke-width="2"><circle cx="59.8" cy="1189.4" r="3.7"/><circle cx="52.9" cy="1203.8" r="4"/><circle cx="67.1" cy="1203.8" r="4"/><path d="M61.4 1192.7 L64.9 1200.3"/></g>
<g stroke="#4a4a4a" stroke-width="7.4" stroke-linecap="round"><path d="M60.00 1531.90 L60.00 1553.50"/><path d="M50.65 1537.30 L69.35 1548.10"/><path d="M69.35 1537.30 L50.65 1548.10"/></g><circle cx="60" cy="1542.7" r="10.3" fill="#4a4a4a"/><circle cx="60" cy="1542.7" r="3.1" fill="#ebebeb"/>
</svg></div></body></html>
